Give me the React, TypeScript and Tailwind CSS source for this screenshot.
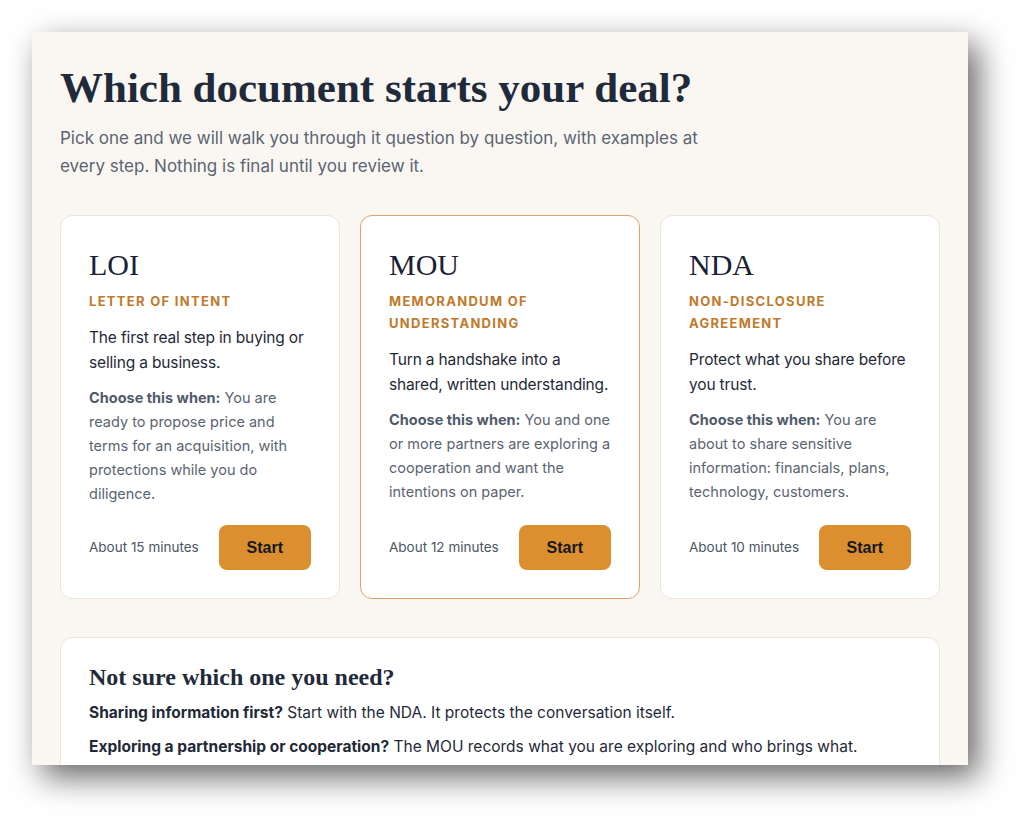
import { ReactNode } from 'react'

const DOCS = [
  {
    code: 'LOI',
    name: 'Letter of intent',
    pitch: 'The first real step in buying or selling a business.',
    when: 'You are ready to propose price and terms for an acquisition, with protections while you do diligence.',
    minutes: 15,
  },
  {
    code: 'MOU',
    name: 'Memorandum of understanding',
    pitch: 'Turn a handshake into a shared, written understanding.',
    when: 'You and one or more partners are exploring a cooperation and want the intentions on paper.',
    minutes: 12,
    featured: true,
  },
  {
    code: 'NDA',
    name: 'Non-disclosure agreement',
    pitch: 'Protect what you share before you trust.',
    when: 'You are about to share sensitive information: financials, plans, technology, customers.',
    minutes: 10,
  },
]

const HINTS: { q: string; a: ReactNode }[] = [
  { q: 'Sharing information first?', a: 'Start with the NDA. It protects the conversation itself.' },
  { q: 'Exploring a partnership or cooperation?', a: 'The MOU records what you are exploring and who brings what.' },
]

const serif = 'font-["Liberation_Serif",Georgia,serif]'

export default function App() {
  return (
    <div className="w-[1030px] h-[828px] bg-white overflow-hidden pl-8 pt-8 font-['Inter','Noto_Sans',sans-serif]">
      <div className="w-[936px] h-[733px] bg-[#faf7f2] overflow-hidden shadow-[10px_12px_30px_rgba(0,0,0,0.6)] px-7 pt-8">
        <h1 className={`${serif} text-[43px] leading-[48px] font-bold text-[#1f2a3a]`}>Which document starts your deal?</h1>
        <p className="mt-3 max-w-[660px] text-[17px] leading-[28px] text-[#5b6472]">
          Pick one and we will walk you through it question by question, with examples at every step. Nothing is final until you review it.
        </p>

        <div className="mt-[35px] grid grid-cols-3 gap-5">
          {DOCS.map((d) => (
            <div key={d.code}
              className={`flex flex-col bg-white rounded-xl border p-7 ${d.featured ? 'border-[#dba36a]' : 'border-[#ebe5db]'}`}>
              <h2 className={`${serif} pt-[3px] text-[30px] leading-[36px] text-[#1a2233]`}>{d.code}</h2>
              <p className="mt-[7px] text-[13px] leading-[22px] font-bold uppercase tracking-[0.1em] text-[#c07a2c]">{d.name}</p>
              <p className="mt-[13px] text-[15.5px] leading-[25px] tracking-[-0.01em] text-[#1f2937]">{d.pitch}</p>
              <p className="mt-[11px] text-[14.5px] leading-[24px] text-[#5b6472]">
                <span className="font-bold text-[#4f5a6a]">Choose this when:</span> {d.when}
              </p>
              <div className="mt-auto pt-[19px] flex items-center justify-between">
                <span className="text-[13.5px] text-[#4b5563]">About {d.minutes} minutes</span>
                <button className="h-[45px] px-7 rounded-lg bg-[#dc8f2e] text-[16px] font-bold text-[#15181d] font-['Liberation_Sans',Arial,sans-serif]">
                  Start
                </button>
              </div>
            </div>
          ))}
        </div>

        <div className="mt-[38px] bg-white rounded-xl border border-[#ebe5db] p-7">
          <h3 className={`${serif} text-[24px] leading-[22px] font-bold text-[#1f2a3a]`}>Not sure which one you need?</h3>
          <div className="mt-[13px] space-y-2.5 text-[15.5px] leading-[24px] text-[#1f2937]">
            {HINTS.map((h) => (
              <p key={h.q}><span className="font-bold">{h.q}</span> {h.a}</p>
            ))}
          </div>
        </div>
      </div>
    </div>
  )
}
